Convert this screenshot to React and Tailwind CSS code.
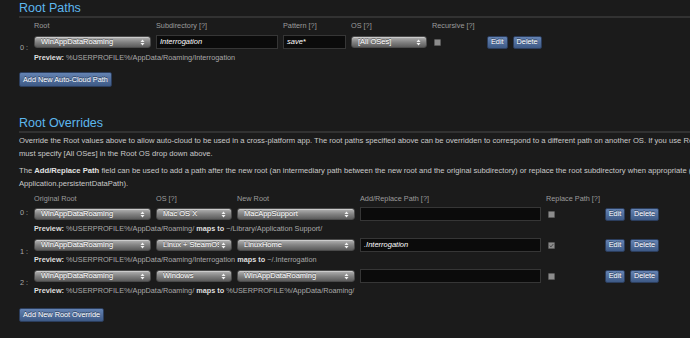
import React from 'react';

// Tiny up/down arrows used on the select pills
const SelectArrows = () => (
  <svg width="5" height="7" viewBox="0 0 5 7" className="shrink-0">
    <path d="M0.5 3 L2.5 0.6 L4.5 3 Z" fill="#f2f2f2" />
    <path d="M0.5 4 L2.5 6.4 L4.5 4 Z" fill="#f2f2f2" />
  </svg>
);

const Select = ({ w, children }) => (
  <div
    className={`${w} flex h-[12px] shrink-0 items-center gap-[2px] rounded-[3px] border border-[#4a4a4a] bg-linear-to-b from-[#b4b4b4] via-[#838383] to-[#5c5c5c] pl-[6px] pr-[5px] text-[7.5px] leading-none text-white shadow-[inset_0_1px_0_rgba(255,255,255,0.35)] [text-shadow:0_-1px_0_rgba(0,0,0,0.45)]`}
  >
    <span className="flex-1 overflow-hidden whitespace-nowrap">{children}</span>
    <SelectArrows />
  </div>
);

const TextInput = ({ w, value }) => (
  <div
    className={`${w} flex h-[14px] shrink-0 items-center border border-[#363636] bg-[#0b0b0b] pl-[3px] text-[7.5px] italic leading-none text-white`}
  >
    {value}
  </div>
);

const Check = ({ checked = false }) => (
  <div className="ml-[2px] flex h-[7px] w-[7px] items-center justify-center rounded-[1px] border border-[#5a5a5a] bg-[#8c8c8c]">
    {checked && (
      <svg width="5" height="5" viewBox="0 0 5 5">
        <path d="M0.7 2.6 L2 3.9 L4.3 1" stroke="#4a4a4a" strokeWidth="1" fill="none" />
      </svg>
    )}
  </div>
);

const Btn = ({ children, className = '' }) => (
  <button
    className={`flex h-[13px] shrink-0 items-center rounded-[2px] border border-[#2b3d5c] bg-linear-to-b from-[#6483b3] to-[#3e5a86] px-[3px] text-[7.3px] leading-none text-white [text-shadow:0_-1px_0_rgba(0,0,0,0.5)] ${className}`}
  >
    {children}
  </button>
);

const Title = ({ children, className = '' }) => (
  <h2
    className={`border-b-2 border-[#323232] pt-[1px] text-[12.5px] leading-[15px] text-[#5db7ee] ${className}`}
  >
    {children}
  </h2>
);

const Preview = ({ from, to }) => (
  <div className="whitespace-nowrap text-[7.3px] leading-[10px] text-[#a9a9a9]">
    <span className="font-bold text-[#dedede]">Preview:</span> {from}
    {to && (
      <>
        {' '}
        <span className="font-bold text-[#dedede]">maps to</span> {to}
      </>
    )}
  </div>
);

const Label = ({ w, children }) => (
  <div className={`${w} shrink-0 whitespace-nowrap`}>{children}</div>
);

const overrides = [
  {
    os: 'Mac OS X',
    root: 'MacAppSupport',
    path: '',
    checked: false,
    from: '%USERPROFILE%/AppData/Roaming/',
    to: '~/Library/Application Support/',
    idx: 'self-start mt-[2px]',
  },
  {
    os: 'Linux + SteamOS',
    root: 'LinuxHome',
    path: '.Interrogation',
    checked: true,
    from: '%USERPROFILE%/AppData/Roaming/Interrogation',
    to: '~/.Interrogation',
    idx: 'self-center',
  },
  {
    os: 'Windows',
    root: 'WinAppDataRoaming',
    path: '',
    checked: false,
    from: '%USERPROFILE%/AppData/Roaming/',
    to: '%USERPROFILE%/AppData/Roaming/',
    idx: 'self-center',
  },
];

export default function App() {
  return (
    <div className="min-h-screen w-full overflow-hidden bg-[#1b1b1b] pl-[19px] font-['Liberation_Sans',Arial,sans-serif] text-[7.3px] text-[#c9c9c9]">
      {/* Root Paths */}
      <Title>Root Paths</Title>

      <div className="mt-[3px] flex gap-[5px] pl-[15px] leading-[10px] text-[#9b9b9b]">
        <Label w="w-[117px]">Root</Label>
        <Label w="w-[122px]">Subdirectory [?]</Label>
        <Label w="w-[63px]">Pattern [?]</Label>
        <Label w="w-[76px]">OS [?]</Label>
        <Label w="w-[50px]">Recursive [?]</Label>
      </div>

      <div className="mt-[4px] flex">
        <div className="flex w-[15px] shrink-0 items-center pb-[2px] pl-[1px] leading-none text-[#a8a8a8]">0 :</div>
        <div>
          <div className="flex items-center gap-[5px]">
            <Select w="w-[117px]">WinAppDataRoaming</Select>
            <TextInput w="w-[122px]" value="Interrogation" />
            <TextInput w="w-[63px]" value="save*" />
            <Select w="w-[76px]">[All OSes]</Select>
            <div className="w-[50px] shrink-0">
              <Check />
            </div>
            <Btn>Edit</Btn>
            <Btn>Delete</Btn>
          </div>
          <div className="mt-[4px]">
            <Preview from="%USERPROFILE%/AppData/Roaming/Interrogation" />
          </div>
        </div>
      </div>

      <Btn className="mt-[9px] h-[15px] px-[3px]">Add New Auto-Cloud Path</Btn>

      {/* Root Overrides */}
      <Title className="mt-[28px]">Root Overrides</Title>

      <p className="mt-[1px] whitespace-nowrap text-[7.65px] leading-[13px]">
        Override the Root values above to allow auto-cloud to be used in a cross-platform app. The root paths specified above can be overridden to correspond to a different path on another OS. If you use Root Overrides you
        <br />
        must specify [All OSes] in the Root OS drop down above.
      </p>
      <p className="mt-[4px] whitespace-nowrap text-[7.65px] leading-[13px]">
        The <span className="font-bold text-[#e2e2e2]">Add/Replace Path</span> field can be used to add a path after the new root (an intermediary path between the new root and the original subdirectory) or replace the root subdirectory when appropriate (e.g. when using Unity's
        <br />
        Application.persistentDataPath).
      </p>

      <div className="mt-[4px] flex gap-[5px] pl-[15px] leading-[10px] text-[#9b9b9b]">
        <Label w="w-[117px]">Original Root</Label>
        <Label w="w-[76px]">OS [?]</Label>
        <Label w="w-[118px]">New Root</Label>
        <Label w="w-[181px]">Add/Replace Path [?]</Label>
        <Label w="w-[54px]">Replace Path [?]</Label>
      </div>

      {overrides.map((r, i) => (
        <div key={i} className="mt-[3px] flex">
          <div className={`flex w-[15px] shrink-0 pl-[1px] leading-none text-[#a8a8a8] ${r.idx}`}>{i} :</div>
          <div>
            <div className="flex items-center gap-[5px]">
              <Select w="w-[117px]">WinAppDataRoaming</Select>
              <Select w="w-[76px]">{r.os}</Select>
              <Select w="w-[118px]">{r.root}</Select>
              <TextInput w="w-[181px]" value={r.path} />
              <div className="w-[54px] shrink-0">
                <Check checked={r.checked} />
              </div>
              <Btn className="w-[20px] justify-center">Edit</Btn>
              <Btn>Delete</Btn>
            </div>
            <div className="mt-[3px] mb-[1px]">
              <Preview from={r.from} to={r.to} />
            </div>
          </div>
        </div>
      ))}

      <Btn className="mt-[11px] h-[14px]">Add New Root Override</Btn>
    </div>
  );
}
